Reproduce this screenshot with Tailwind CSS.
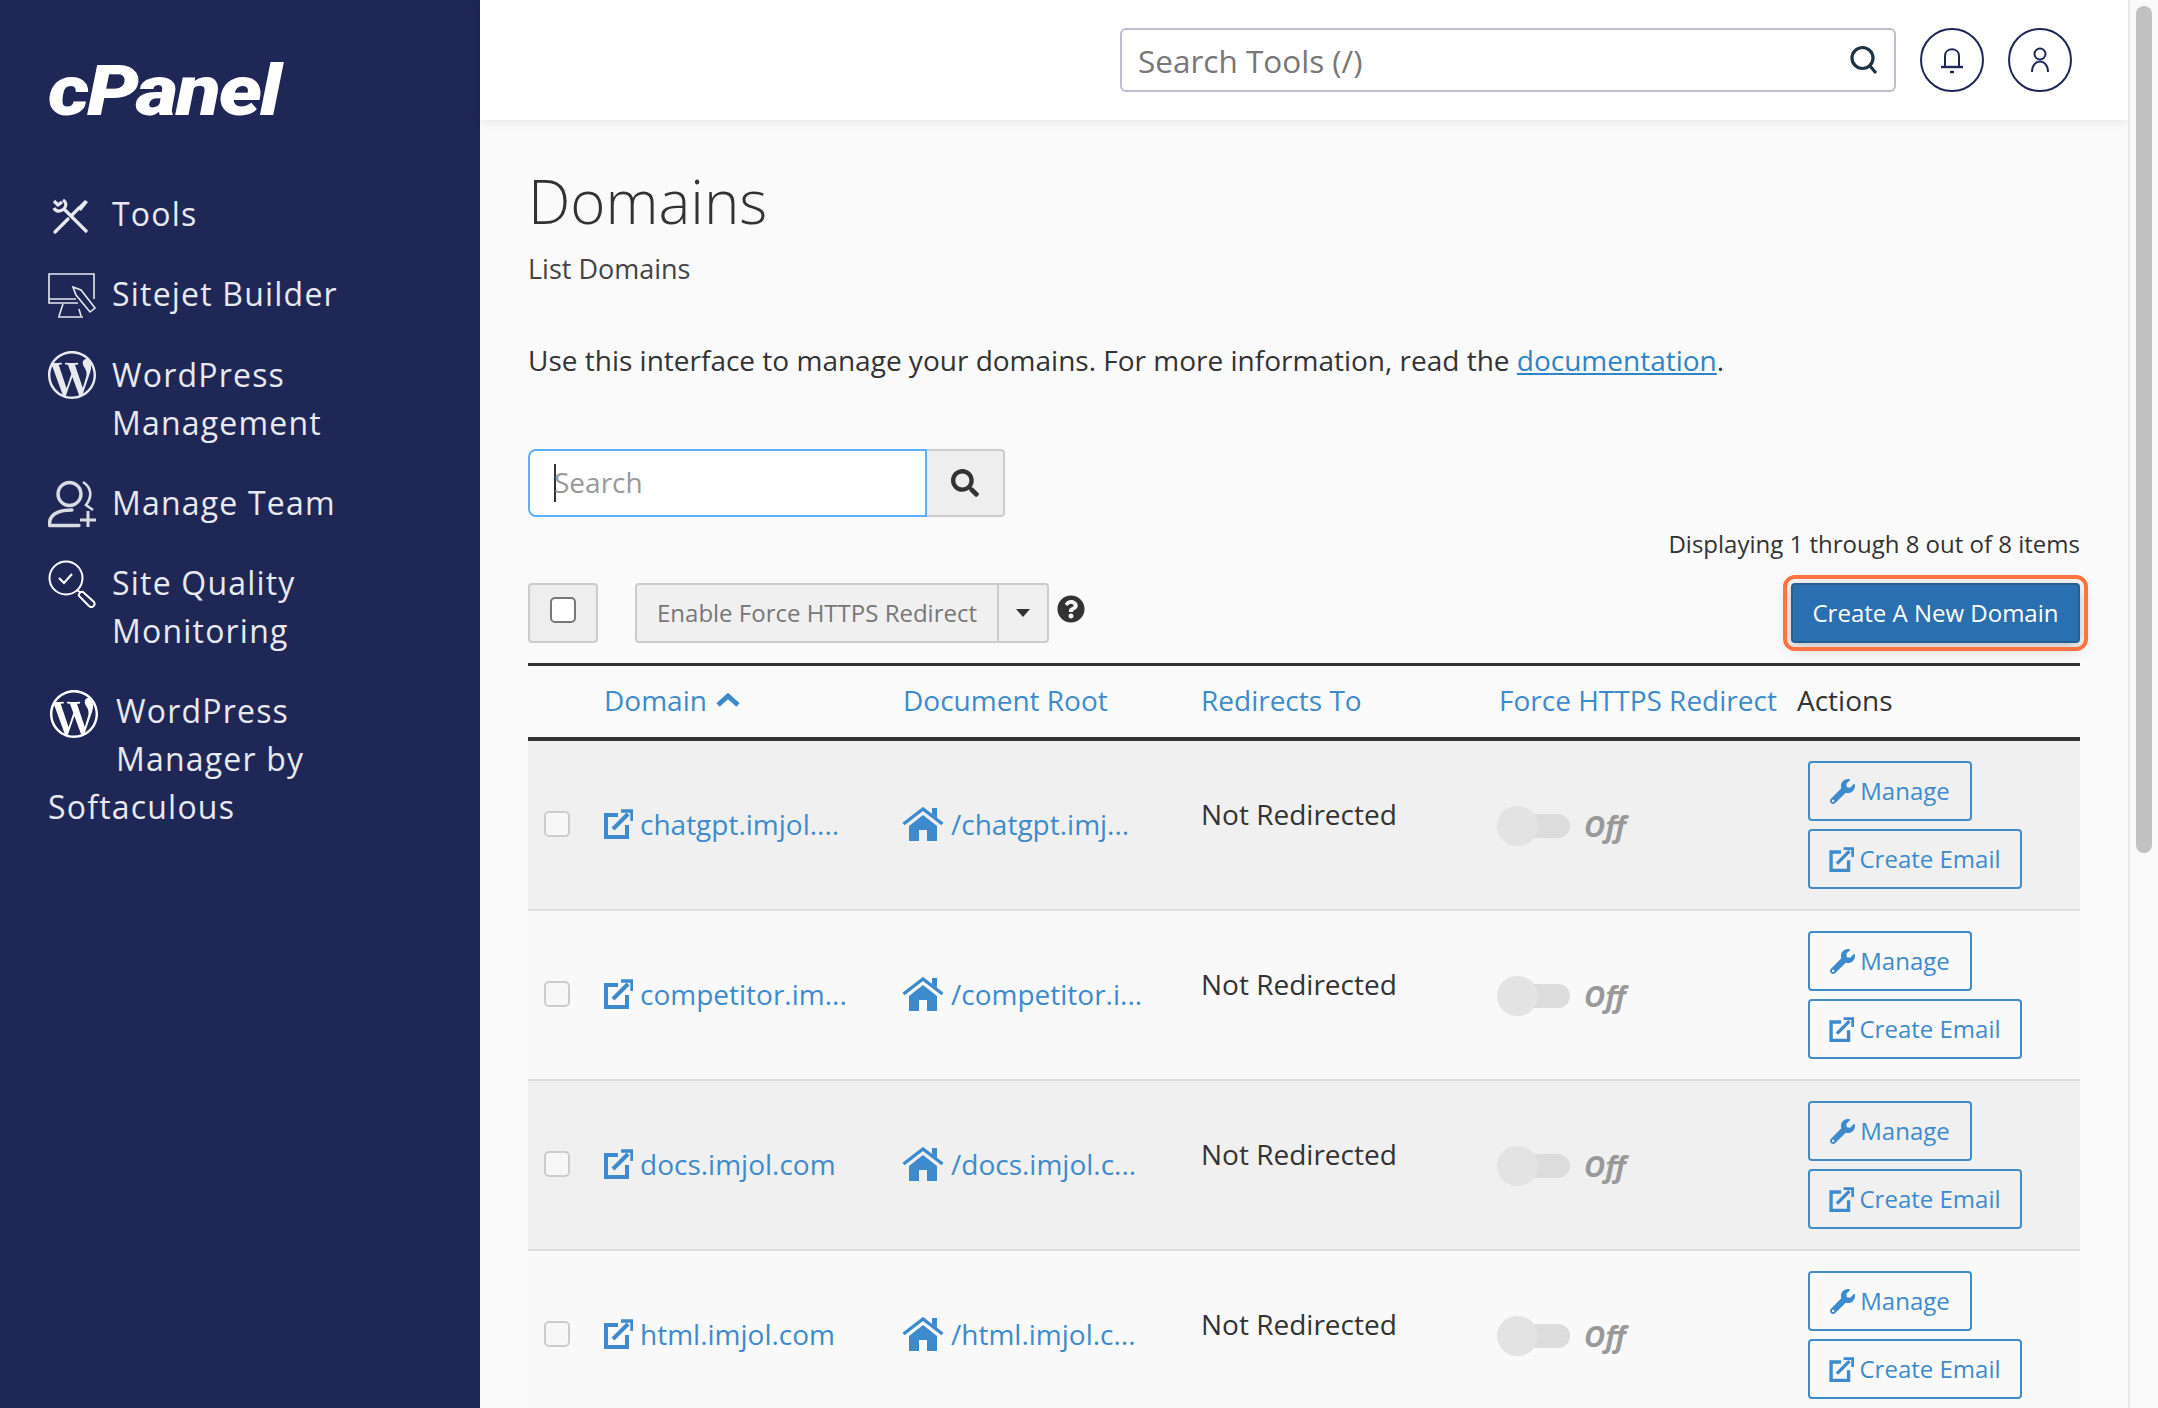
<!DOCTYPE html>
<html lang="en">
<head>
    <meta charset="UTF-8" />
    <title>Domains - cPanel</title>
    <script src="https://cdn.jsdelivr.net/npm/@tailwindcss/browser@4"></script>
</head>
<body class="h-[1408px] w-[2158px] overflow-hidden bg-[#fafafa] font-['Open_Sans',sans-serif] text-[#333]">
<div class="flex h-full">
    <!-- sidebar -->
    <aside class="w-[480px] shrink-0 bg-[#1f2756] px-[48px] pt-[46px] text-[32px] leading-[48px] tracking-[1.2px] text-[#e7e9ef]">
        <div class="h-[144px] pt-[7px] font-['Roboto',sans-serif] text-[71px] leading-[76px] font-black italic tracking-[-2px] text-white"><span class="inline-block origin-left scale-x-[1.155]">cPanel</span></div>
        <nav class="flex flex-col gap-[32px]">
            <a class="flex gap-[16px]">
                <svg class="mt-[9px] h-[36px] w-[48px] shrink-0" viewBox="0 0 48 36" fill="none" stroke="#e7e9ef" stroke-width="3.2">
                    <path d="M7 33 L20 20 M24 16 L31 9" stroke-linecap="round"/>
                    <path d="M29 9 L37 1 L40 3 L33 12 Z" fill="#e7e9ef" stroke="none"/>
                    <path d="M39 33 L16 10 C19 6 18 3 15 1 M16 10 C12 13 8 13 6 9 M6 2 L10 6 L14 3" stroke-linejoin="round"/>
                </svg>
                <span>Tools</span>
            </a>
            <a class="flex gap-[16px]">
                <svg class="mt-[3px] h-[46px] w-[48px] shrink-0" viewBox="0 0 48 46" fill="none" stroke="#e7e9ef" stroke-width="1.6">
                    <path d="M46 26 V1 H1 V30 H30 M1 26 H28"/>
                    <path d="M15 31 L11 43 M31 36 L33 43 M10 44 H35"/>
                    <path d="M25 14 L33 17 L47 35 L42 39 L28 22 Z"/>
                </svg>
                <span>Sitejet Builder</span>
            </a>
            <a class="flex gap-[16px]">
                <svg class="mt-[0px] h-[48px] w-[48px] shrink-0" viewBox="0 0 24 24" fill="#e7e9ef"><path d="M21.469 6.825c.84 1.537 1.318 3.3 1.318 5.175 0 3.979-2.156 7.456-5.363 9.325l3.295-9.527c.615-1.54.82-2.771.82-3.864 0-.405-.026-.78-.07-1.11m-7.981.105c.647-.03 1.232-.105 1.232-.105.582-.075.514-.93-.067-.899 0 0-1.755.135-2.88.135-1.064 0-2.85-.15-2.85-.15-.585-.03-.661.855-.075.885 0 0 .54.061 1.125.09l1.68 4.605-2.37 7.08L5.354 6.9c.649-.03 1.234-.1 1.234-.1.585-.075.516-.93-.065-.896 0 0-1.746.138-2.874.138-.2 0-.438-.008-.69-.015C4.911 3.15 8.235 1.215 12 1.215c2.809 0 5.365 1.072 7.286 2.833-.046-.003-.091-.009-.141-.009-1.06 0-1.812.923-1.812 1.914 0 .89.513 1.643 1.06 2.531.411.72.89 1.643.89 2.977 0 .915-.354 1.994-.821 3.479l-1.075 3.585-3.9-11.61.001.014zM12 22.784c-1.059 0-2.081-.153-3.048-.437l3.237-9.406 3.315 9.087c.024.053.05.101.078.149-1.12.393-2.325.609-3.582.609M1.211 12c0-1.564.336-3.05.935-4.39L7.29 21.709C3.694 19.96 1.212 16.271 1.211 12M12 0C5.385 0 0 5.385 0 12s5.385 12 12 12 12-5.385 12-12S18.615 0 12 0"/></svg>
                <span>WordPress<br>Management</span>
            </a>
            <a class="flex gap-[16px]">
                <svg class="mt-[1px] h-[48px] w-[48px] shrink-0" viewBox="0 0 48 48" fill="none" stroke="#d9dbe3" stroke-width="3.4">
                    <circle cx="21.5" cy="14" r="11.5"/>
                    <path d="M35 2 C43 7 45 16 38 25 L45 30" stroke-width="2.6"/>
                    <path d="M1.5 45 C1 35 9 30 24 30 M1.5 45.5 H31" stroke-linecap="round"/>
                    <path d="M40 31 V47 M32 40 H48" stroke-width="3"/>
                </svg>
                <span>Manage Team</span>
            </a>
            <a class="-mt-[1px] flex gap-[16px]">
                <svg class="mt-[1px] h-[48px] w-[48px] shrink-0" viewBox="0 0 48 48" fill="none" stroke="#fff" stroke-width="2">
                    <circle cx="18" cy="18" r="16.5"/>
                    <path d="M11 18 L16 23 L24 14" stroke-width="2.2"/>
                    <path d="M29 30 L33 33 M35 32 L46 42 C48 45 44 49 41 46 L31 36 C30 34 33 31 35 32 Z"/>
                </svg>
                <span>Site Quality<br>Monitoring</span>
            </a>
            <a class="block">
                <span class="float-left h-[96px] w-[68px] pt-[3px] pl-[2px]">
                    <svg class="h-[48px] w-[48px]" viewBox="0 0 24 24" fill="#fff"><path d="M21.469 6.825c.84 1.537 1.318 3.3 1.318 5.175 0 3.979-2.156 7.456-5.363 9.325l3.295-9.527c.615-1.54.82-2.771.82-3.864 0-.405-.026-.78-.07-1.11m-7.981.105c.647-.03 1.232-.105 1.232-.105.582-.075.514-.93-.067-.899 0 0-1.755.135-2.88.135-1.064 0-2.85-.15-2.85-.15-.585-.03-.661.855-.075.885 0 0 .54.061 1.125.09l1.68 4.605-2.37 7.08L5.354 6.9c.649-.03 1.234-.1 1.234-.1.585-.075.516-.93-.065-.896 0 0-1.746.138-2.874.138-.2 0-.438-.008-.69-.015C4.911 3.15 8.235 1.215 12 1.215c2.809 0 5.365 1.072 7.286 2.833-.046-.003-.091-.009-.141-.009-1.06 0-1.812.923-1.812 1.914 0 .89.513 1.643 1.06 2.531.411.72.89 1.643.89 2.977 0 .915-.354 1.994-.821 3.479l-1.075 3.585-3.9-11.61.001.014zM12 22.784c-1.059 0-2.081-.153-3.048-.437l3.237-9.406 3.315 9.087c.024.053.05.101.078.149-1.12.393-2.325.609-3.582.609M1.211 12c0-1.564.336-3.05.935-4.39L7.29 21.709C3.694 19.96 1.212 16.271 1.211 12M12 0C5.385 0 0 5.385 0 12s5.385 12 12 12 12-5.385 12-12S18.615 0 12 0"/></svg>
                </span>
                <span>WordPress Manager by Softaculous</span>
            </a>
        </nav>
    </aside>

    <!-- main -->
    <main class="w-[1648px] shrink-0">
        <header class="flex h-[120px] items-start justify-end gap-[24px] bg-white pt-[28px] pr-[56px] shadow-[0_2px_10px_rgba(0,0,0,0.08)]">
            <div class="flex h-[64px] w-[776px] items-center justify-between rounded-[6px] border-2 border-[#bcbfcf] pr-[15px] pl-[16px] text-[31.5px] text-[#777]">
                <span class="pt-[2px]">Search Tools (/)</span>
                <svg class="h-[30px] w-[30px]" viewBox="0 0 30 30" fill="none" stroke="#1c3345" stroke-width="3.2"><circle cx="13.5" cy="13" r="10.5"/><path d="M21 21 L27 28"/></svg>
            </div>
            <div class="flex h-[64px] w-[64px] items-center justify-center rounded-full border-2 border-[#1f2756]">
                <svg class="h-[30px] w-[30px]" viewBox="0 0 30 30" fill="none" stroke="#1f2756" stroke-width="2"><path d="M8 21 V11 C8 2 22 2 22 11 V21"/><path d="M4 22 H26" stroke-width="2.4"/><path d="M13 27 H17" stroke-width="2.4"/></svg>
            </div>
            <div class="flex h-[64px] w-[64px] items-center justify-center rounded-full border-2 border-[#1f2756]">
                <svg class="h-[30px] w-[30px]" viewBox="0 0 30 30" fill="none" stroke="#1f2756" stroke-width="2"><circle cx="15" cy="9" r="5.5"/><path d="M7 27 C7 13 23 13 23 27"/></svg>
            </div>
        </header>

        <div class="px-[48px]">
            <h1 class="pt-[39px] text-[60px] leading-[84px] font-light">Domains</h1>
            <p class="mt-[6px] text-[27px] leading-[40px] text-[#444]">List Domains</p>
            <p class="mt-[51px] text-[28px] leading-[40px]">Use this interface to manage your domains. For more information, read the <a class="text-[#2e84c6] underline">documentation</a>.</p>

            <div class="mt-[69px] flex h-[68px] w-[477px]">
                <div class="flex w-[399px] items-center rounded-l-[8px] border-2 border-[#5cb0fa] bg-white pl-[24px] text-[28px] text-[#999]">
                    <span class="h-[38px] w-[2px] bg-[#333]"></span>
                    <span class="-ml-[2px] pb-[2px]">Search</span>
                </div>
                <div class="flex w-[78px] items-center justify-center rounded-r-[4px] border-2 border-l-0 border-[#ccc] bg-[#eee]">
                    <svg class="h-[28px] w-[28px]" viewBox="0 0 512 512" fill="#333"><path d="M505 442.7L405.3 343c-4.5-4.5-10.6-7-17-7H372c27.6-35.3 44-79.7 44-128C416 93.1 322.9 0 208 0S0 93.1 0 208s93.1 208 208 208c48.3 0 92.7-16.4 128-44v16.3c0 6.4 2.5 12.5 7 17l99.7 99.7c9.4 9.4 24.6 9.4 33.9 0l28.3-28.3c9.4-9.4 9.4-24.6.1-34zM208 336c-70.7 0-128-57.2-128-128 0-70.7 57.2-128 128-128 70.7 0 128 57.2 128 128 0 70.7-57.2 128-128 128z"/></svg>
                </div>
            </div>

            <p class="mt-[8px] text-right text-[24px] leading-[38px]">Displaying 1 through 8 out of 8 items</p>

            <div class="mt-[20px] flex h-[60px] items-start">
                <div class="flex h-[60px] w-[70px] items-start justify-center rounded-[4px] border-2 border-[#ccc] bg-[#eee] pt-[12px]">
                    <span class="h-[26px] w-[26px] rounded-[5px] border-2 border-[#777] bg-white"></span>
                </div>
                <div class="ml-[37px] flex h-[60px] w-[414px] items-center rounded-[4px] border-2 border-[#ccc] bg-[#f0f0f0] text-[24px] text-[#777]">
                    <span class="flex h-full w-[362px] items-center justify-center border-r-2 border-[#ccc]">Enable Force HTTPS Redirect</span>
                    <span class="flex flex-1 justify-center"><span class="h-0 w-0 border-x-[7px] border-t-[8px] border-x-transparent border-t-[#333]"></span></span>
                </div>
                <svg class="mt-[12px] ml-[8px] h-[28px] w-[28px]" viewBox="0 0 512 512" fill="#333"><path d="M504 256c0 136.997-111.043 248-248 248S8 392.997 8 256C8 119.083 119.043 8 256 8s248 111.083 248 248zM262.655 90c-54.497 0-89.255 22.957-116.549 63.758-3.536 5.286-2.353 12.415 2.715 16.258l34.699 26.31c5.205 3.947 12.621 3.008 16.665-2.122 17.864-22.658 30.113-35.797 57.303-35.797 20.429 0 45.698 13.148 45.698 32.958 0 14.976-12.363 22.667-32.534 33.976C247.128 238.528 216 254.941 216 296v4c0 6.627 5.373 12 12 12h56c6.627 0 12-5.373 12-12v-1.333c0-28.462 83.186-29.647 83.186-106.667 0-58.002-60.165-102-116.531-102zM256 338c-25.365 0-46 20.635-46 46 0 25.364 20.635 46 46 46s46-20.636 46-46c0-25.365-20.635-46-46-46z"/></svg>
                <button class="ml-auto flex h-[60px] w-[289px] items-center justify-center rounded-[4px] border-2 border-[#265f94] bg-[#2a6fb0] text-[24px] text-white outline-[4px] outline-offset-[4px] outline-[#ff7340] shadow-[0_4px_16px_rgba(0,0,0,0.25)]">Create A New Domain</button>
            </div>

            <!-- table -->
            <div class="mt-[20px] grid h-[78px] grid-cols-[76px_299px_298px_298px_298px_283px] items-center border-y-[3px] border-y-[#333] border-b-[4px] pb-[4px] text-[28px] text-[#3d8bcd]">
                <span></span>
                <span class="flex items-center gap-[8px]">Domain
                    <svg class="h-[16px] w-[26px]" viewBox="0 0 26 16" fill="none" stroke="#3d8bcd" stroke-width="5"><path d="M3 13 L13 4 L23 13"/></svg>
                </span>
                <span>Document Root</span>
                <span>Redirects To</span>
                <span class="whitespace-nowrap">Force HTTPS Redirect</span>
                <span class="text-[#333]">Actions</span>
            </div>

            <div class="grid h-[170px] grid-cols-[76px_298px_299px_296px_311px_272px] border-b-2 border-[#ddd] bg-[#f0f0f0]">
                <div class="pt-[70px] pl-[16px]"><span class="block h-[26px] w-[26px] rounded-[5px] border-2 border-[#ccc] bg-[#f7f7f7]"></span></div>
                <div class="flex h-[170px] items-center gap-[7px] pb-[4px] text-[28px] text-[#3d8bcd]">
                    <svg class="h-[30px] w-[29px]" viewBox="0 0 29 30" fill="none" stroke="#3d8bcd" stroke-width="4"><path d="M14 6 H2 V28 H23 V16"/><path d="M9 20 L24 5"/><path d="M17 2 H28 V12" stroke-width="3.4"/></svg>
                    <span>chatgpt.imjol....</span>
                </div>
                <div class="flex h-[170px] items-center gap-[7px] pb-[4px] text-[28px] text-[#3d8bcd]">
                    <svg class="h-[34px] w-[42px]" viewBox="0 0 42 34" fill="#3d8bcd"><path d="M1.5 17 L21 2 L40.5 17" fill="none" stroke="#3d8bcd" stroke-width="3.4"/><path d="M30 1 H35 V11 L30 7 Z"/><path d="M7 19 L21 8 L35 19 V34 H25 V23 H17 V34 H7 Z"/></svg>
                    <span>/chatgpt.imj...</span>
                </div>
                <div class="pt-[53px] text-[28px] leading-[40px]">Not Redirected</div>
                <div class="flex h-[170px] items-center">
                    <span class="relative ml-[0px] h-[24px] w-[73px] rounded-full bg-[#dcdcdc]"><span class="absolute -top-[8px] left-0 h-[40px] w-[41px] rounded-full bg-[#e3e3e3]"></span></span>
                    <span class="ml-[14px] text-[29px] font-bold text-[#999] italic">Off</span>
                </div>
                <div class="flex flex-col items-start gap-[8px] pt-[20px] text-[24px] text-[#3d8bcd]">
                    <a class="flex h-[60px] w-[164px] items-center justify-center gap-[5px] rounded-[4px] border-2 border-[#428bca]">
                        <svg class="h-[25px] w-[25px]" viewBox="0 0 512 512" fill="#3d8bcd"><path d="M507.73 109.1c-2.24-9.03-13.54-12.09-20.12-5.51l-74.36 74.36-67.88-11.31-11.31-67.88 74.36-74.36c6.62-6.62 3.43-17.9-5.66-20.16-47.38-11.74-99.55.91-136.58 37.93-39.64 39.64-50.55 97.1-34.05 147.2L18.74 402.76c-24.99 24.99-24.99 65.51 0 90.5 24.99 24.99 65.51 24.99 90.5 0l213.21-213.21c50.12 16.71 107.47 5.68 147.37-34.22 37.07-37.07 49.7-89.32 37.91-136.73zM64 472c-13.25 0-24-10.75-24-24 0-13.26 10.75-24 24-24s24 10.74 24 24c0 13.25-10.75 24-24 24z"/></svg>Manage</a>
                    <a class="flex h-[60px] w-[214px] items-center justify-center gap-[5px] rounded-[4px] border-2 border-[#428bca]">
                        <svg class="h-[25px] w-[25px]" viewBox="0 0 29 30" fill="none" stroke="#3d8bcd" stroke-width="4"><path d="M14 6 H2 V28 H23 V16"/><path d="M9 20 L24 5"/><path d="M17 2 H28 V12" stroke-width="3.4"/></svg>Create Email</a>
                </div>
            </div>
            <div class="grid h-[170px] grid-cols-[76px_298px_299px_296px_311px_272px] border-b-2 border-[#ddd] bg-[#f9f9f9]">
                <div class="pt-[70px] pl-[16px]"><span class="block h-[26px] w-[26px] rounded-[5px] border-2 border-[#ccc] bg-[#f7f7f7]"></span></div>
                <div class="flex h-[170px] items-center gap-[7px] pb-[4px] text-[28px] text-[#3d8bcd]">
                    <svg class="h-[30px] w-[29px]" viewBox="0 0 29 30" fill="none" stroke="#3d8bcd" stroke-width="4"><path d="M14 6 H2 V28 H23 V16"/><path d="M9 20 L24 5"/><path d="M17 2 H28 V12" stroke-width="3.4"/></svg>
                    <span>competitor.im...</span>
                </div>
                <div class="flex h-[170px] items-center gap-[7px] pb-[4px] text-[28px] text-[#3d8bcd]">
                    <svg class="h-[34px] w-[42px]" viewBox="0 0 42 34" fill="#3d8bcd"><path d="M1.5 17 L21 2 L40.5 17" fill="none" stroke="#3d8bcd" stroke-width="3.4"/><path d="M30 1 H35 V11 L30 7 Z"/><path d="M7 19 L21 8 L35 19 V34 H25 V23 H17 V34 H7 Z"/></svg>
                    <span>/competitor.i...</span>
                </div>
                <div class="pt-[53px] text-[28px] leading-[40px]">Not Redirected</div>
                <div class="flex h-[170px] items-center">
                    <span class="relative ml-[0px] h-[24px] w-[73px] rounded-full bg-[#dcdcdc]"><span class="absolute -top-[8px] left-0 h-[40px] w-[41px] rounded-full bg-[#e3e3e3]"></span></span>
                    <span class="ml-[14px] text-[29px] font-bold text-[#999] italic">Off</span>
                </div>
                <div class="flex flex-col items-start gap-[8px] pt-[20px] text-[24px] text-[#3d8bcd]">
                    <a class="flex h-[60px] w-[164px] items-center justify-center gap-[5px] rounded-[4px] border-2 border-[#428bca]">
                        <svg class="h-[25px] w-[25px]" viewBox="0 0 512 512" fill="#3d8bcd"><path d="M507.73 109.1c-2.24-9.03-13.54-12.09-20.12-5.51l-74.36 74.36-67.88-11.31-11.31-67.88 74.36-74.36c6.62-6.62 3.43-17.9-5.66-20.16-47.38-11.74-99.55.91-136.58 37.93-39.64 39.64-50.55 97.1-34.05 147.2L18.74 402.76c-24.99 24.99-24.99 65.51 0 90.5 24.99 24.99 65.51 24.99 90.5 0l213.21-213.21c50.12 16.71 107.47 5.68 147.37-34.22 37.07-37.07 49.7-89.32 37.91-136.73zM64 472c-13.25 0-24-10.75-24-24 0-13.26 10.75-24 24-24s24 10.74 24 24c0 13.25-10.75 24-24 24z"/></svg>Manage</a>
                    <a class="flex h-[60px] w-[214px] items-center justify-center gap-[5px] rounded-[4px] border-2 border-[#428bca]">
                        <svg class="h-[25px] w-[25px]" viewBox="0 0 29 30" fill="none" stroke="#3d8bcd" stroke-width="4"><path d="M14 6 H2 V28 H23 V16"/><path d="M9 20 L24 5"/><path d="M17 2 H28 V12" stroke-width="3.4"/></svg>Create Email</a>
                </div>
            </div>
            <div class="grid h-[170px] grid-cols-[76px_298px_299px_296px_311px_272px] border-b-2 border-[#ddd] bg-[#f0f0f0]">
                <div class="pt-[70px] pl-[16px]"><span class="block h-[26px] w-[26px] rounded-[5px] border-2 border-[#ccc] bg-[#f7f7f7]"></span></div>
                <div class="flex h-[170px] items-center gap-[7px] pb-[4px] text-[28px] text-[#3d8bcd]">
                    <svg class="h-[30px] w-[29px]" viewBox="0 0 29 30" fill="none" stroke="#3d8bcd" stroke-width="4"><path d="M14 6 H2 V28 H23 V16"/><path d="M9 20 L24 5"/><path d="M17 2 H28 V12" stroke-width="3.4"/></svg>
                    <span>docs.imjol.com</span>
                </div>
                <div class="flex h-[170px] items-center gap-[7px] pb-[4px] text-[28px] text-[#3d8bcd]">
                    <svg class="h-[34px] w-[42px]" viewBox="0 0 42 34" fill="#3d8bcd"><path d="M1.5 17 L21 2 L40.5 17" fill="none" stroke="#3d8bcd" stroke-width="3.4"/><path d="M30 1 H35 V11 L30 7 Z"/><path d="M7 19 L21 8 L35 19 V34 H25 V23 H17 V34 H7 Z"/></svg>
                    <span>/docs.imjol.c...</span>
                </div>
                <div class="pt-[53px] text-[28px] leading-[40px]">Not Redirected</div>
                <div class="flex h-[170px] items-center">
                    <span class="relative ml-[0px] h-[24px] w-[73px] rounded-full bg-[#dcdcdc]"><span class="absolute -top-[8px] left-0 h-[40px] w-[41px] rounded-full bg-[#e3e3e3]"></span></span>
                    <span class="ml-[14px] text-[29px] font-bold text-[#999] italic">Off</span>
                </div>
                <div class="flex flex-col items-start gap-[8px] pt-[20px] text-[24px] text-[#3d8bcd]">
                    <a class="flex h-[60px] w-[164px] items-center justify-center gap-[5px] rounded-[4px] border-2 border-[#428bca]">
                        <svg class="h-[25px] w-[25px]" viewBox="0 0 512 512" fill="#3d8bcd"><path d="M507.73 109.1c-2.24-9.03-13.54-12.09-20.12-5.51l-74.36 74.36-67.88-11.31-11.31-67.88 74.36-74.36c6.62-6.62 3.43-17.9-5.66-20.16-47.38-11.74-99.55.91-136.58 37.93-39.64 39.64-50.55 97.1-34.05 147.2L18.74 402.76c-24.99 24.99-24.99 65.51 0 90.5 24.99 24.99 65.51 24.99 90.5 0l213.21-213.21c50.12 16.71 107.47 5.68 147.37-34.22 37.07-37.07 49.7-89.32 37.91-136.73zM64 472c-13.25 0-24-10.75-24-24 0-13.26 10.75-24 24-24s24 10.74 24 24c0 13.25-10.75 24-24 24z"/></svg>Manage</a>
                    <a class="flex h-[60px] w-[214px] items-center justify-center gap-[5px] rounded-[4px] border-2 border-[#428bca]">
                        <svg class="h-[25px] w-[25px]" viewBox="0 0 29 30" fill="none" stroke="#3d8bcd" stroke-width="4"><path d="M14 6 H2 V28 H23 V16"/><path d="M9 20 L24 5"/><path d="M17 2 H28 V12" stroke-width="3.4"/></svg>Create Email</a>
                </div>
            </div>
            <div class="grid h-[170px] grid-cols-[76px_298px_299px_296px_311px_272px] border-b-2 border-[#ddd] bg-[#f9f9f9]">
                <div class="pt-[70px] pl-[16px]"><span class="block h-[26px] w-[26px] rounded-[5px] border-2 border-[#ccc] bg-[#f7f7f7]"></span></div>
                <div class="flex h-[170px] items-center gap-[7px] pb-[4px] text-[28px] text-[#3d8bcd]">
                    <svg class="h-[30px] w-[29px]" viewBox="0 0 29 30" fill="none" stroke="#3d8bcd" stroke-width="4"><path d="M14 6 H2 V28 H23 V16"/><path d="M9 20 L24 5"/><path d="M17 2 H28 V12" stroke-width="3.4"/></svg>
                    <span>html.imjol.com</span>
                </div>
                <div class="flex h-[170px] items-center gap-[7px] pb-[4px] text-[28px] text-[#3d8bcd]">
                    <svg class="h-[34px] w-[42px]" viewBox="0 0 42 34" fill="#3d8bcd"><path d="M1.5 17 L21 2 L40.5 17" fill="none" stroke="#3d8bcd" stroke-width="3.4"/><path d="M30 1 H35 V11 L30 7 Z"/><path d="M7 19 L21 8 L35 19 V34 H25 V23 H17 V34 H7 Z"/></svg>
                    <span>/html.imjol.c...</span>
                </div>
                <div class="pt-[53px] text-[28px] leading-[40px]">Not Redirected</div>
                <div class="flex h-[170px] items-center">
                    <span class="relative ml-[0px] h-[24px] w-[73px] rounded-full bg-[#dcdcdc]"><span class="absolute -top-[8px] left-0 h-[40px] w-[41px] rounded-full bg-[#e3e3e3]"></span></span>
                    <span class="ml-[14px] text-[29px] font-bold text-[#999] italic">Off</span>
                </div>
                <div class="flex flex-col items-start gap-[8px] pt-[20px] text-[24px] text-[#3d8bcd]">
                    <a class="flex h-[60px] w-[164px] items-center justify-center gap-[5px] rounded-[4px] border-2 border-[#428bca]">
                        <svg class="h-[25px] w-[25px]" viewBox="0 0 512 512" fill="#3d8bcd"><path d="M507.73 109.1c-2.24-9.03-13.54-12.09-20.12-5.51l-74.36 74.36-67.88-11.31-11.31-67.88 74.36-74.36c6.62-6.62 3.43-17.9-5.66-20.16-47.38-11.74-99.55.91-136.58 37.93-39.64 39.64-50.55 97.1-34.05 147.2L18.74 402.76c-24.99 24.99-24.99 65.51 0 90.5 24.99 24.99 65.51 24.99 90.5 0l213.21-213.21c50.12 16.71 107.47 5.68 147.37-34.22 37.07-37.07 49.7-89.32 37.91-136.73zM64 472c-13.25 0-24-10.75-24-24 0-13.26 10.75-24 24-24s24 10.74 24 24c0 13.25-10.75 24-24 24z"/></svg>Manage</a>
                    <a class="flex h-[60px] w-[214px] items-center justify-center gap-[5px] rounded-[4px] border-2 border-[#428bca]">
                        <svg class="h-[25px] w-[25px]" viewBox="0 0 29 30" fill="none" stroke="#3d8bcd" stroke-width="4"><path d="M14 6 H2 V28 H23 V16"/><path d="M9 20 L24 5"/><path d="M17 2 H28 V12" stroke-width="3.4"/></svg>Create Email</a>
                </div>
            </div>
        </div>
    </main>

    <!-- scrollbar -->
    <div class="w-[30px] shrink-0 border-l-2 border-[#e9e9e9] bg-[#fafafa] pt-[6px] pl-[6px]">
        <div class="h-[847px] w-[16px] rounded-full bg-[#c1c1c1]"></div>
    </div>
</div>
</body>
</html>
